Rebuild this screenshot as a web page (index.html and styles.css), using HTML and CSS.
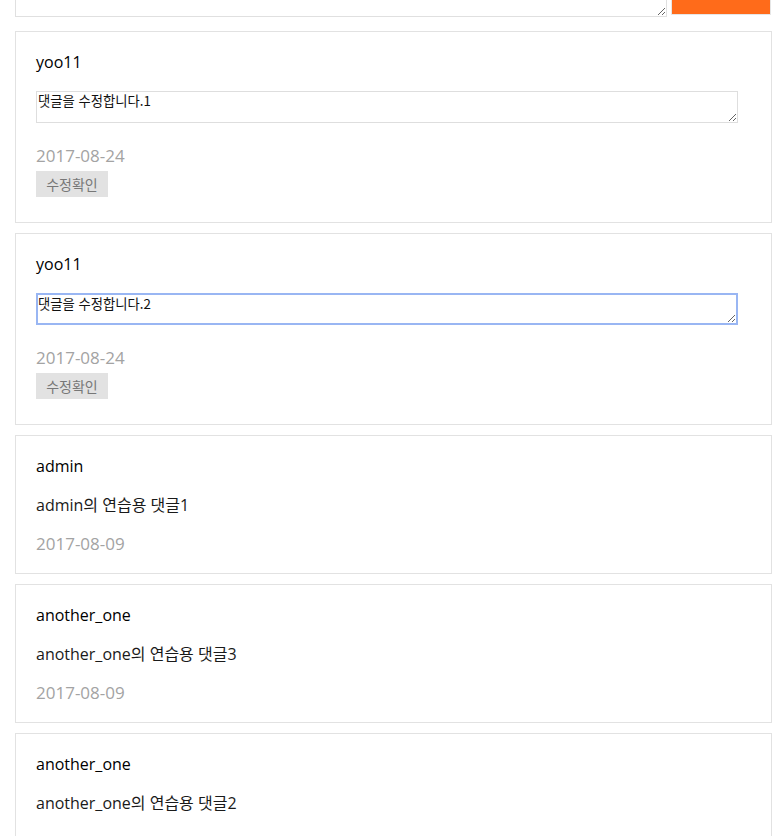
FILE: index.html
```html
<!DOCTYPE html>
<html lang="ko">
<head>
<meta charset="utf-8">
<title>댓글</title>
<link rel="stylesheet" href="styles.css">
</head>
<body>
<div class="wrap">
  <form class="write">
    <textarea class="write-input"></textarea>
    <button type="button" class="write-btn"></button>
  </form>

  <div class="card">
    <div class="name">yoo11</div>
    <textarea class="edit">댓글을 수정합니다.1</textarea>
    <div class="date edit-date">2017-08-24</div>
    <button type="button" class="confirm">수정확인</button>
  </div>

  <div class="card">
    <div class="name">yoo11</div>
    <textarea class="edit focus">댓글을 수정합니다.2</textarea>
    <div class="date edit-date">2017-08-24</div>
    <button type="button" class="confirm">수정확인</button>
  </div>

  <div class="card">
    <div class="name">admin</div>
    <div class="text">admin의 연습용 댓글1</div>
    <div class="date">2017-08-09</div>
  </div>

  <div class="card">
    <div class="name">another_one</div>
    <div class="text">another_one의 연습용 댓글3</div>
    <div class="date">2017-08-09</div>
  </div>

  <div class="card">
    <div class="name">another_one</div>
    <div class="text">another_one의 연습용 댓글2</div>
    <div class="date">2017-08-09</div>
  </div>
</div>
</body>
</html>
```
FILE: styles.css
```css
html, body {
  margin: 0;
  padding: 0;
  background: #fff;
}
body {
  font-family: "Open Sans", "Noto Sans CJK KR", sans-serif;
  color: #111;
  overflow: hidden;
}
.wrap {
  width: 757px;
  margin-left: 15px;
  margin-top: -44px;
}
.write {
  display: flex;
  gap: 4px;
  margin: 0 0 14px 0;
  height: 61px;
}
.write-input {
  box-sizing: border-box;
  width: 652px;
  height: 61px;
  border: 1px solid #e0e0e0;
  margin: 0;
  resize: vertical;
}
.write-btn {
  box-sizing: border-box;
  width: 100px;
  height: 59px;
  margin: 0;
  background: #ff6b1a;
  border: 1px solid #e6e6e6;
}
.card {
  border: 1px solid #e2e2e2;
  padding: 21px 20px 19px 20px;
  margin-bottom: 10px;
  display: flex;
  flex-direction: column;
  align-items: flex-start;
  gap: 20px;
}
.name, .text, .date {
  font-size: 16px;
  line-height: 19px;
}
.name { color: #000; }
.text { color: #1a1a1a; }
.date {
  color: #a3a3a3;
  font-size: 17px;
  line-height: 18px;
  margin-bottom: 1px;
}
.edit {
  box-sizing: border-box;
  width: 702px;
  height: 32px;
  margin: -1px 0 0 0;
  padding: 0 1px;
  border: 1px solid #dedede;
  font-family: "Noto Sans CJK KR", sans-serif;
  font-size: 13.33px;
  line-height: 17px;
  color: #111;
  resize: vertical;
  outline: none;
}
.edit.focus {
  border: 2px solid #99b6f3;
  padding: 0 0;
}
.edit-date {
  margin-top: 4px;
}
.confirm {
  margin: -15px 0 6px 0;
  width: 72px;
  height: 26px;
  padding: 0;
  border: none;
  background: #e2e2e2;
  color: #777;
  font-family: "Noto Sans CJK KR", sans-serif;
  font-size: 14px;
}
```
